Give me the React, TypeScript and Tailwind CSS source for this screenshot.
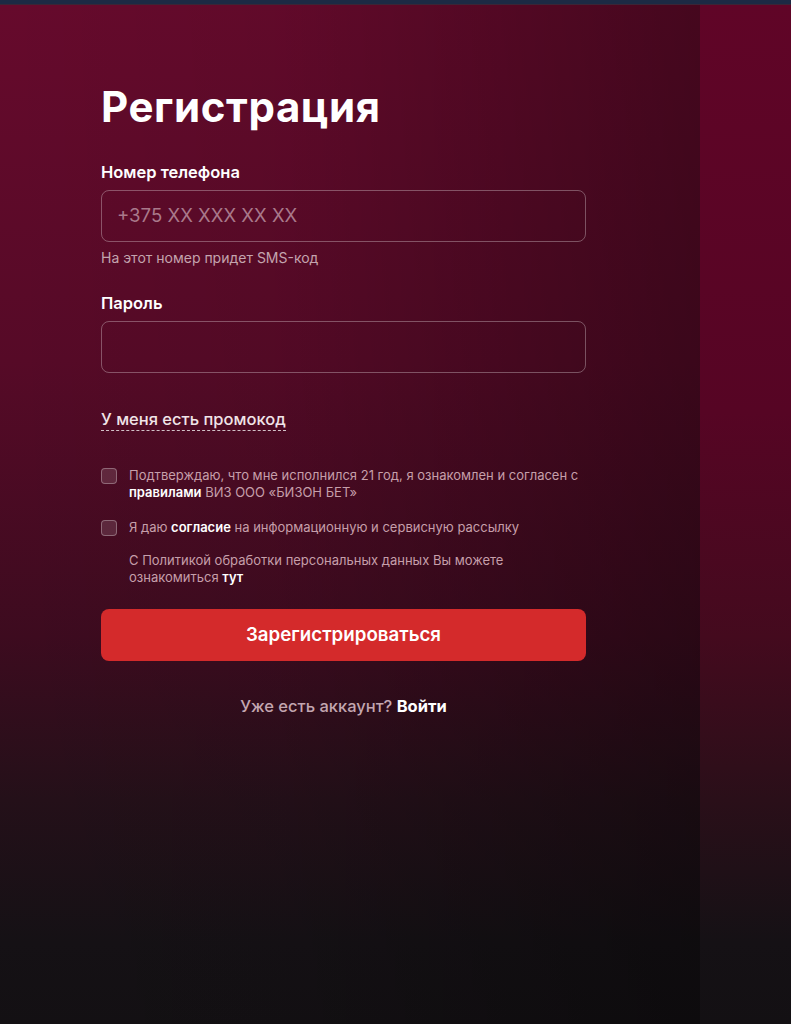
import React from "react";

export default function App() {
  return (
    <div className="w-full h-[1024px] flex flex-col overflow-hidden bg-[#141014]" style={{ fontFamily: "Inter, 'Noto Sans', sans-serif" }}>
      <div className="h-[4px] bg-[#1c2a44] shrink-0" />
      <div className="h-[1px] bg-[#3b2536] shrink-0" />
      <div className="flex flex-1">
        <div className="w-[700px] shrink-0 bg-[linear-gradient(to_right,rgba(0,0,0,0)_0%,rgba(0,0,0,0.05)_40%,rgba(0,0,0,0.32)_100%),linear-gradient(to_bottom,#660a2c_0%,#560a27_35%,#3d0b1f_62%,#241019_78%,#151115_92%,#131013_100%)]">
          <div className="pl-[101px] w-[586px] pt-[76px] flex flex-col">
            <h1 className="text-[42px] leading-[52px] font-bold text-white tracking-[0.6px]">Регистрация</h1>
            <label className="mt-[27px] text-[16.5px] leading-[24px] font-semibold text-white">Номер телефона</label>
            <div className="mt-[6px] h-[52px] rounded-[8px] border border-[rgba(255,255,255,0.3)] flex items-center px-[15px]">
              <span className="text-[18.6px] text-[#a9798b]">+375 XX XXX XX XX</span>
            </div>
            <div className="mt-[7px] text-[14px] leading-[18px] text-[#c4a4ae]">На этот номер придет SMS-код</div>
            <label className="mt-[24px] text-[16.5px] leading-[24px] font-semibold text-white">Пароль</label>
            <div className="mt-[6px] h-[52px] rounded-[8px] border border-[rgba(255,255,255,0.3)]" />
            <div className="mt-[34px]">
              <span className="text-[16.5px] leading-[24px] font-medium text-[#f1e4e8] border-b border-dashed border-[rgba(255,255,255,0.75)] pb-[1px]">У меня есть промокод</span>
            </div>
            <div className="mt-[36px] flex gap-[12px] items-start">
              <div className="w-[16px] h-[16px] mt-[1px] shrink-0 rounded-[4px] border border-[rgba(255,255,255,0.3)] bg-[rgba(255,255,255,0.12)]" />
              <p className="text-[13px] leading-[17px] text-[#c69faa]">
                Подтверждаю, что мне исполнился 21 год, я ознакомлен и согласен с <span className="font-semibold text-white">правилами</span> ВИЗ ООО «БИЗОН БЕТ»
              </p>
            </div>
            <div className="mt-[18px] flex gap-[12px] items-start">
              <div className="w-[16px] h-[16px] mt-[1px] shrink-0 rounded-[4px] border border-[rgba(255,255,255,0.3)] bg-[rgba(255,255,255,0.12)]" />
              <p className="text-[13px] leading-[17px] text-[#c69faa]">
                Я даю <span className="font-semibold text-white">согласие</span> на информационную и сервисную рассылку
              </p>
            </div>
            <p className="mt-[16px] pl-[28px] pr-[70px] text-[13px] leading-[17px] text-[#c69faa]">
              С Политикой обработки персональных данных Вы можете ознакомиться <span className="font-semibold text-white">тут</span>
            </p>
            <button className="mt-[23px] h-[52px] rounded-[8px] bg-[#d42a2b] text-white text-[18.7px] font-semibold">Зарегистрироваться</button>
            <div className="mt-[33px] text-center text-[16.5px] font-medium text-[#c3a6b0]">
              Уже есть аккаунт? <span className="font-bold text-white">Войти</span>
            </div>
          </div>
        </div>
        <div className="flex-1 bg-[linear-gradient(to_bottom,#600527_0%,#560524_40%,#440a1e_62%,#2a0f19_78%,#151115_92%,#131013_100%)]" />
      </div>
    </div>
  );
}
